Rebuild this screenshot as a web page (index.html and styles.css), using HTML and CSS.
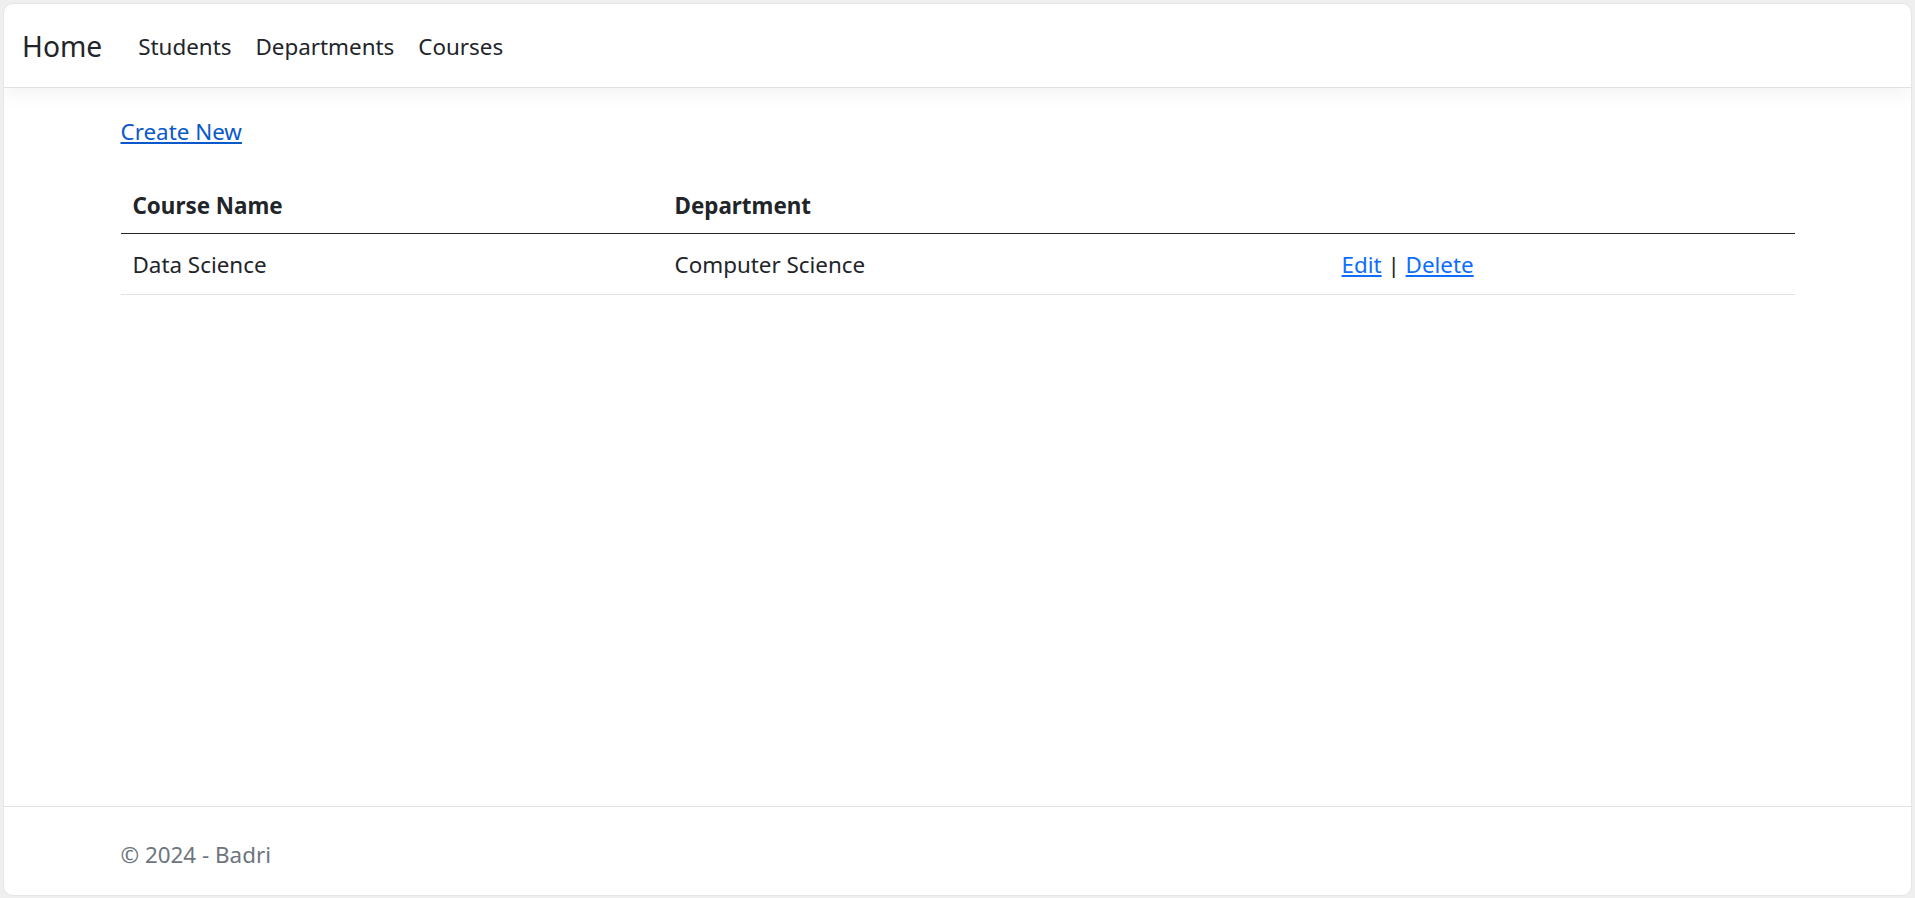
FILE: index.html
```html
<!DOCTYPE html>
<html lang="en">
<head>
<meta charset="utf-8">
<title>Courses</title>
<link rel="stylesheet" href="styles.css">
</head>
<body>
<div class="window">
  <header class="navbar">
    <a class="brand" href="#">Home</a>
    <nav class="nav">
      <a class="nav-link" href="#">Students</a>
      <a class="nav-link" href="#">Departments</a>
      <a class="nav-link" href="#">Courses</a>
    </nav>
  </header>
  <main class="container">
    <p class="create"><a class="link-create" href="#">Create New</a></p>
    <table class="table">
      <thead>
        <tr>
          <th class="col-name">Course Name</th>
          <th class="col-dept">Department</th>
          <th class="col-act"></th>
        </tr>
      </thead>
      <tbody>
        <tr>
          <td>Data Science</td>
          <td>Computer Science</td>
          <td><a class="link" href="#">Edit</a> | <a class="link" href="#">Delete</a></td>
        </tr>
      </tbody>
    </table>
  </main>
  <footer class="footer">
    <div class="container footer-inner">© 2024 - Badri</div>
  </footer>
</div>
</body>
</html>
```
FILE: styles.css
```css
* { box-sizing: border-box; }
html, body { margin: 0; height: 100%; }
body {
  background: #efefef;
  font-family: "Segoe UI", "Noto Sans", "Open Sans", sans-serif;
  font-size: 22.4px;
  line-height: 36px;
  color: #212529;
  padding: 3px 3px 2px;
  overflow: hidden;
}
.window {
  background: #fff;
  height: 893px;
  border-radius: 10px;
  border: 1px solid #e6e6e6;
  overflow: hidden;
  display: flex;
  flex-direction: column;
}
.navbar {
  display: flex;
  align-items: center;
  height: 84px;
  padding: 2px 18px 0;
  border-bottom: 1.5px solid #dee2e6;
  box-shadow: 0 6px 18px rgba(0,0,0,0.05);
  margin-bottom: 25px;
  flex: none;
}
.brand {
  font-size: 28.2px;
  line-height: 45px;
  color: #212529;
  text-decoration: none;
  margin-right: 24px;
}
.nav { display: flex; }
.nav-link {
  padding: 0 12px;
  color: #212529;
  text-decoration: none;
}
.container {
  width: 1710px;
  margin: 0 auto;
  padding: 0 18px;
}
main.container { flex: 1; }
.create { margin: 1px 0 24px; }
.link-create { color: #0a58ca; }
.link { color: #0d6efd; }
.table {
  width: 100%;
  border-collapse: collapse;
}
.table th, .table td {
  padding: 12px;
  text-align: left;
  vertical-align: top;
}
.table th { font-weight: 700; padding-top: 14px; padding-bottom: 9px; }
.table thead th { border-bottom: 1.5px solid #212529; }
.table tbody td { border-bottom: 1.5px solid #dee2e6; padding-top: 13px; padding-bottom: 11px; }
.col-name { width: 542px; }
.col-dept { width: 667px; }
.footer {
  flex: none;
  height: 89px;
  border-top: 1.5px solid #dee2e6;
  color: #6c757d;
  line-height: 96px;
  white-space: nowrap;
}
.footer-inner { padding-left: 18px; }
```
